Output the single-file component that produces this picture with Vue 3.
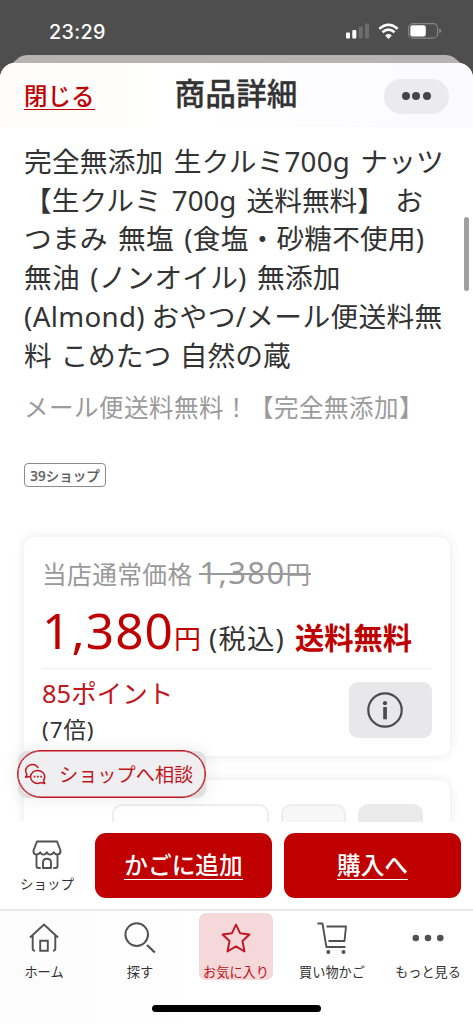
<script setup>
const title = [
  { text: '完全無添加 生クルミ700g ナッツ', cls: 't1' },
  { text: '【生クルミ 700g 送料無料】 お', cls: 't2' },
  { text: 'つまみ 無塩 (食塩・砂糖不使用)', cls: 't3' },
  { text: '無油 (ノンオイル) 無添加', cls: 't4' },
  { text: '(Almond) おやつ/メール便送料無', cls: 't5' },
  { text: '料 こめたつ 自然の蔵', cls: 't6' },
]
</script>

<template>
  <div class="screen">
    <header class="status">
      <span class="time">23:29</span>
      <svg class="status-icons" width="100" height="20" viewBox="0 0 100 20">
        <g fill="#fff">
          <rect x="1" y="12.500" width="4" height="6" rx="1" />
          <rect x="7.300" y="10" width="4" height="8.500" rx="1" />
          <g fill="#6d6d6d"><rect x="13.700" y="6.500" width="4" height="12" rx="1" /><rect x="20" y="3.500" width="4" height="15" rx="1" /></g>
          <path d="M43.500 19l-3.300-3.600q3.300-2.600 6.600 0z" />
        </g>
        <g fill="none" stroke="#fff" stroke-width="2.500">
          <path d="M34.300 8.700q9.200-8 18.400 0M37.400 12.300q6.100-5.400 12.200 0" />
        </g>
        <rect x="63.600" y="3.600" width="29" height="14.600" rx="4.500" fill="none" stroke="#858585" stroke-width="1.200" />
        <path d="M94.200 8.500q2 .5 2 2.300t-2 2.300z" fill="#858585" />
        <rect x="65.300" y="5.300" width="15.500" height="11.200" rx="2.300" fill="#fff" />
      </svg>
    </header>

    <div class="back-sheet">
      <svg width="473" height="28" viewBox="0 0 473 28">
        <path d="M6 13.500L19 2.500Q22 0 27 0H446Q451 0 454 2.500L467 13.500z" fill="#b6b3b3" />
      </svg>
    </div>

    <main class="sheet">
      <div class="bar">
        <a class="close">閉じる</a>
        <h1>商品詳細</h1>
        <button class="more"><i></i><i></i><i></i></button>
      </div>

      <section class="content">
        <h2><span v-for="l in title" :key="l.cls" :class="l.cls">{{ l.text }}</span></h2>
        <p class="sub">メール便送料無料！【完全無添加】</p>
        <span class="tag">39ショップ</span>

        <div class="card price-card">
          <div class="old">当店通常価格 <s><b>1,380</b>円</s></div>
          <div class="price">
            <span class="num">1,380</span><span class="yen">円</span>
            <span class="tax">(税込)</span><span class="ship">送料無料</span>
          </div>
          <div class="points">
            <div>
              <div class="pt">85ポイント</div>
              <div class="times">(7倍)</div>
            </div>
            <button class="info">
              <svg width="36" height="36" viewBox="0 0 36 36">
                <circle cx="18" cy="18" r="16.700" fill="none" stroke="#4b4b4d" stroke-width="2.200" />
                <circle cx="18" cy="11.200" r="2.100" fill="#4b4b4d" />
                <rect x="16.200" y="15" width="3.700" height="12.300" fill="#4b4b4d" />
              </svg>
            </button>
          </div>
        </div>
        <div class="card next-card">
          <span class="box b1"></span><span class="box b2"></span><span class="box b3"></span>
        </div>
        <div class="scrollbar"></div>
        <div class="consult-shade"></div>
        <button class="consult">
          <svg width="22" height="22" viewBox="0 0 22 22" fill="none" stroke="#bf1620" stroke-width="1.500" stroke-linejoin="round">
            <path d="M14.200 5C12.500 1.500 8.500.600 5.200 2.300C1.500 4.200.400 8.500 3 11.400L1.600 14.200L6 13.400" />
            <path d="M19.500 17.300C21.200 14.700 20.900 11.400 18.600 9.300C16 6.800 11.700 6.800 9 9C6 11.500 5.800 15.500 8.200 18.100C10.400 20.500 13.800 21 16.700 19.600L20.700 20.500z" />
            <path d="M9.700 13.700h1.700m1.600 0h1.700m1.600 0h1.700" stroke-width="1.800" />
          </svg>
          <span>ショップへ相談</span>
        </button>
      </section>

      <section class="actions">
        <div class="shop">
          <svg width="30" height="30" viewBox="0 0 30 30" fill="none" stroke="#515153" stroke-width="1.900" stroke-linejoin="round" stroke-linecap="round">
            <path d="M5 1.500H25L28.500 10.500C29 15.400 23.300 15.400 21.700 12.300C20 15.400 16.300 15.400 15 12.300C13.300 15.400 9.700 15.400 8.300 12.300C6.500 15.400 1 15.400 1.500 10.500zM4.500 15V26Q4.500 28 6.500 28H8M25.500 15V26Q25.500 28 23.500 28H22M11 28V22.500Q11 18.700 15 18.700T19 22.500V28z" />
          </svg>
          <span>ショップ</span>
        </div>
        <button class="buy"><span>かごに追加</span></button>
        <button class="buy"><span>購入へ</span></button>
      </section>
    </main>

    <nav>
      <div class="tab">
        <svg width="32" height="32" viewBox="0 0 32 32" fill="none" stroke="#515153" stroke-width="1.900">
          <path d="M2 15.500L16 2.500L30 15.500M4.700 13.500V26.500Q4.700 28.700 7 28.700M27.300 13.500V26.500Q27.300 28.700 25 28.700M12.200 28.700V18.700H19.800V28.700z" />
        </svg>
        <span>ホーム</span>
      </div>
      <div class="tab">
        <svg width="32" height="32" viewBox="0 0 32 32" fill="none" stroke="#515153" stroke-width="2">
          <circle cx="12.700" cy="12.600" r="11.300" /><path d="M23 23L30.800 30.500" stroke-width="2.300" />
        </svg>
        <span>探す</span>
      </div>
      <div class="tab active">
        <svg width="32" height="32" viewBox="0 0 32 32" fill="none" stroke="#bf1620" stroke-width="1.900" stroke-linejoin="round">
          <path d="M16 2.700L20 11.200L29.400 12.500L22.500 19L24.500 29.500L16 24.400L7.500 29.500L9.500 19L2.600 12.500L12 11.200z" />
        </svg>
        <span>お気に入り</span>
      </div>
      <div class="tab">
        <svg width="32" height="32" viewBox="0 0 32 32" fill="none" stroke="#515153" stroke-width="1.900" stroke-linejoin="round">
          <path d="M1.500 1.500H6.500L10.400 25H29.500M10.500 4.500H30L28.500 19H12.500" />
          <g fill="#515153" stroke="none"><circle cx="12.300" cy="30" r="2" /><circle cx="27.500" cy="30" r="2" /></g>
        </svg>
        <span>買い物かご</span>
      </div>
      <div class="tab">
        <svg width="32" height="32" viewBox="0 0 32 32" fill="#515153">
          <circle cx="3.800" cy="16" r="3.300" /><circle cx="16" cy="16" r="3.300" /><circle cx="28.300" cy="16" r="3.300" />
        </svg>
        <span>もっと見る</span>
      </div>
      <div class="home-indicator"></div>
    </nav>
  </div>
</template>

<style>
body { background: #4e4e4e; overflow: hidden; }
</style>

<style scoped>
* { box-sizing: border-box; }
.screen {
  position: relative; width: 473px; height: 1024px; overflow: hidden;
  display: flex; flex-direction: column; background: #4e4e4e; color: #333;
  font-family: "Noto Sans", "Noto Sans CJK JP", sans-serif;
}
button { border: 0; padding: 0; font: inherit; color: inherit; display: flex; align-items: center; justify-content: center; }
h1, h2, p { margin: 0; font-weight: 400; }
.status { height: 63px; flex: none; display: flex; justify-content: space-between; padding: 20px 27px 0 49px; color: #fff; }
.time { font: 500 19.800px/24px Inter, sans-serif; letter-spacing: .3px; }
.status-icons { display: block; margin-right: 1px; }
.back-sheet { position: absolute; left: 0; top: 55px; height: 28px; }
.back-sheet svg { display: block; }
.sheet { position: relative; height: 846px; flex: none; background: #fff; border-radius: 15px 15px 0 0; display: flex; flex-direction: column; }
.bar { height: 64px; flex: none; display: flex; align-items: center; justify-content: space-between; padding: 0 24px; border-radius: 15px 15px 0 0; background: linear-gradient(90deg, #fffdfb, #fff 40%, #fafaff); }
.close { width: 71px; color: #bf0000; font-size: 23.500px; line-height: 26px; font-weight: 500; white-space: nowrap; border-bottom: 1.500px solid #bf0000; height: 27px; margin-top: 2px; display: flex; align-items: center; }
h1 { font-size: 30.700px; font-weight: 500; line-height: 40px; -webkit-text-stroke: .3px #333; margin: -4px 0 0 2px; white-space: nowrap; }
.more { width: 65px; height: 35px; border-radius: 18px; background: #ebebed; gap: 2.500px; margin: 2px 0 0 9px; }
.more i { width: 8px; height: 8px; border-radius: 50%; background: #454547; }
.content { position: relative; height: 695px; overflow: hidden; padding: 15px 24px 0; flex: none; display: flex; flex-direction: column; align-items: flex-start; }
h2 { flex: none; font-size: 27.700px; line-height: 38.700px; display: flex; flex-direction: column; white-space: nowrap; }
h2 span { word-spacing: 3px; }
.t1, .t3, .t4 { letter-spacing: .2px; }
.t5 { letter-spacing: .35px; }
h2 .t5 { word-spacing: -1px; }
h2 .t6 { word-spacing: 1.500px; }
.sub { flex: none; font-size: 24.500px; letter-spacing: .5px; line-height: 34px; color: #9b9b9b; white-space: nowrap; margin-top: 17px; }
.tag { flex: none; margin-top: 38px; height: 24px; width: 82px; border: 1px solid #8b8b8b; border-radius: 4px; display: flex; align-items: center; justify-content: center; font-size: 13.500px; font-weight: 500; -webkit-text-stroke: .2px #606060; color: #606060; white-space: nowrap; }
.card { width: 426px; background: #fff; border-radius: 10px; box-shadow: 0 0 12px rgba(0, 0, 0, .09); flex: none; }
.price-card { margin-top: 50px; height: 219px; padding: 13px 18px 0 18px; }
.old { font-size: 24.700px; letter-spacing: .4px; line-height: 44px; height: 44px; color: #999; white-space: nowrap; }
.old s { text-decoration: none; position: relative; display: inline-block; height: 44px; }
.old s::after { content: ""; position: absolute; left: 0; right: 0; top: 23px; height: 1.500px; background: #999; }
.old b { font-weight: 400; font-size: 31px; letter-spacing: 1.400px; }
.price { height: 75px; display: flex; align-items: baseline; white-space: nowrap; line-height: 72px; border-bottom: 1px solid #eee; color: #bf0000; }
.num { font-size: 49.500px; letter-spacing: 1.100px; }
.yen { font-size: 27px; }
.tax { font-size: 27.500px; color: #333; margin-left: 8px; letter-spacing: 1.100px; }
.ship { font-size: 29.300px; font-weight: 700; margin-left: 10px; }
.points { display: flex; justify-content: space-between; padding-top: 5px; }
.pt { font-size: 25.500px; line-height: 38px; color: #bf1620; }
.times { font-size: 22.500px; line-height: 35px; letter-spacing: .9px; }
.info { width: 83px; height: 56px; background: #e8e8ea; border-radius: 9px; margin-top: 8px; padding-right: 12px; }
.next-card { margin-top: 24px; height: 100px; padding: 24px 27px 0 88px; display: flex; }
.box { height: 60px; border-radius: 10px; }
.b1 { width: 157px; border: 2px solid #eee; }
.b2 { width: 65px; margin-left: 12px; border: 2px solid #eee; background: #f7f7f7; }
.b3 { width: 65px; margin-left: 12px; background: #eaeaea; }
.scrollbar { position: absolute; right: 4px; top: 90px; width: 5px; height: 74px; border-radius: 3px; background: #a0a0a0; }
.consult-shade { position: absolute; left: 18px; top: 624px; width: 188px; height: 47px; border-radius: 9px; background: #e0e0e0; box-shadow: 0 0 18px rgba(0, 0, 0, .09); }
.consult { position: absolute; left: 17px; top: 623px; width: 189px; height: 48px; border: 1.600px solid #bf1620; border-radius: 24px; background: #efeff1; color: #bf1620; font-size: 19.200px; justify-content: flex-start; padding-left: 6px; gap: 13px; white-space: nowrap; box-shadow: inset 0 0 0 .5px #bf1620; }
.actions { height: 87px; flex: none; padding: 11px 12px 0 0; display: flex; gap: 12px; background: #fff; }
.shop { width: 83px; padding: 7px 0 0 11px; display: flex; flex-direction: column; align-items: center; font-size: 13.500px; line-height: 20px; gap: 4px; white-space: nowrap; }
.shop svg { flex: none; }
.buy { flex: 1; height: 65px; border-radius: 11px; background: #c00000; color: #fff; font-size: 23.700px; font-weight: 500; white-space: nowrap; }
.buy span { height: 29px; line-height: 29px; border-bottom: 1.500px solid #fff; }
nav { position: relative; flex: none; height: 115px; border-top: 2px solid #e8e8e8; background: linear-gradient(90deg, #fcfcfc, #fff 45%); display: flex; padding: 2px 0 0 7px; gap: 22px; }
.tab { width: 74px; height: 67px; flex: none; display: flex; flex-direction: column; align-items: center; padding-top: 9px; font-size: 13.200px; line-height: 20px; white-space: nowrap; }
.tab svg { flex: none; }
.tab span { margin-top: 8px; }
.active { background: #f4d8da; border-radius: 7px; color: #bf1620; }
.home-indicator { position: absolute; left: 152px; top: 94px; width: 169px; height: 7px; border-radius: 4px; background: #000; }
</style>
